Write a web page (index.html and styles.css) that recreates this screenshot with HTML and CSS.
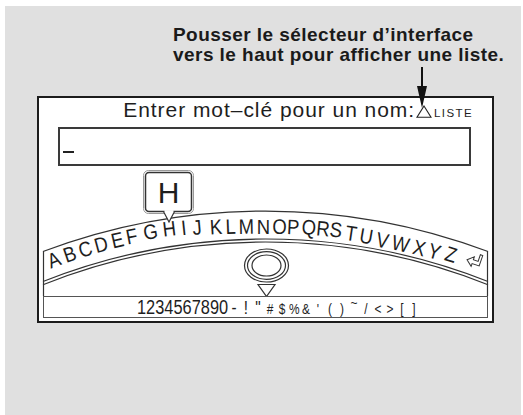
FILE: index.html
```html
<!DOCTYPE html>
<html lang="fr">
<head>
<meta charset="utf-8">
<title>Entrer mot-clé</title>
<link rel="stylesheet" href="styles.css">
</head>
<body>
<div class="panel">
  <p class="note">Pousser le sélecteur d’interface<br>vers le haut pour afficher une liste.</p>
  <svg class="pointer-arrow" width="14" height="42" viewBox="0 0 14 42">
    <line x1="7" y1="0" x2="7" y2="22" stroke="#111" stroke-width="2"/>
    <polygon points="2,19 12,19 7,41" fill="#111"/>
  </svg>
  <div class="screen">
    <div class="header"><span class="title">Entrer mot–clé pour un nom:</span><svg class="tri" width="16" height="13" viewBox="0 0 16 13"><polygon points="8,1 15,12.3 1,12.3" fill="none" stroke="#222" stroke-width="1.1"/></svg><span class="liste">LISTE</span></div>
    <div class="input"><span class="cursor"></span></div>
    <svg class="wheel" width="453" height="130" viewBox="39 166 453 130">
      <g fill="none" stroke="#333" stroke-width="1.2">
        <path d="M43 251.5 A632 632 0 0 1 488 251.5"/>
        <path d="M43 281.5 A604 604 0 0 1 488 281.5"/>
        <path d="M43 284.7 A601 601 0 0 1 488 284.7"/>
        <line x1="43.5" y1="251" x2="43.5" y2="296"/>
        <line x1="487.5" y1="251" x2="487.5" y2="296"/>
        <ellipse cx="266.5" cy="265.5" rx="22" ry="16.5"/>
        <ellipse cx="266.5" cy="265.5" rx="19" ry="13.8"/>
        <ellipse cx="266.5" cy="265.5" rx="14.5" ry="10.5"/>
      </g>
      <polygon points="258,284.5 275,284.5 266.5,296.5" fill="#fff" stroke="#333" stroke-width="1.2"/>
      <g class="letters">
        <text transform="translate(56.5 266.5) rotate(-21) scale(0.88 1)">A</text>
        <text transform="translate(72 261) rotate(-19) scale(0.88 1)">B</text>
        <text transform="translate(87.5 256) rotate(-17) scale(0.88 1)">C</text>
        <text transform="translate(103 251.5) rotate(-15) scale(0.88 1)">D</text>
        <text transform="translate(119 247) rotate(-13) scale(0.88 1)">E</text>
        <text transform="translate(133 243.5) rotate(-11) scale(0.88 1)">F</text>
        <text transform="translate(151.5 239) rotate(-9) scale(0.88 1)">G</text>
        <text transform="translate(170 236) rotate(-7) scale(0.88 1)">H</text>
        <text transform="translate(184.5 235) rotate(-6) scale(0.88 1)">I</text>
        <text transform="translate(197.5 234.5) rotate(-5) scale(0.88 1)">J</text>
        <text transform="translate(216.5 234) rotate(-3.5) scale(0.88 1)">K</text>
        <text transform="translate(231 233.8) rotate(-2) scale(0.88 1)">L</text>
        <text transform="translate(246.5 233.8) rotate(-1) scale(0.88 1)">M</text>
        <text transform="translate(263.5 234) scale(0.88 1)">N</text>
        <text transform="translate(279.5 234) rotate(1) scale(0.88 1)">O</text>
        <text transform="translate(293 234.3) rotate(2.5) scale(0.88 1)">P</text>
        <text transform="translate(308.5 234.5) rotate(4) scale(0.88 1)">Q</text>
        <text transform="translate(322.5 236) rotate(5.5) scale(0.88 1)">R</text>
        <text transform="translate(335 237) rotate(7) scale(0.88 1)">S</text>
        <text transform="translate(350 240.5) rotate(8.5) scale(0.88 1)">T</text>
        <text transform="translate(365 243.5) rotate(10) scale(0.88 1)">U</text>
        <text transform="translate(381 247.5) rotate(11.5) scale(0.88 1)">V</text>
        <text transform="translate(399 251) rotate(13) scale(0.88 1)">W</text>
        <text transform="translate(417.5 255) rotate(14.5) scale(0.88 1)">X</text>
        <text transform="translate(432.5 258.5) rotate(16) scale(0.88 1)">Y</text>
        <text transform="translate(449 261.5) rotate(17) scale(0.88 1)">Z</text>
      </g>
      <path d="M0 6 L6 1 L6 4 L11 4 L11 -3 L13.5 -3 L13.5 8 L6 8 L6 11 Z" transform="translate(469 254) rotate(19)" fill="none" stroke="#333" stroke-width="1"/>
      <rect x="143.5" y="170.5" width="50" height="43" rx="5" fill="none" stroke="#999" stroke-width="1"/>
      <rect x="145.5" y="172.5" width="46" height="39" rx="3.5" fill="#fff" stroke="#333" stroke-width="1.5"/>
      <polygon points="163.5,211.5 169,222 174.5,211.5" fill="#fff" stroke="#333" stroke-width="1.2"/>
      <rect x="164.5" y="210.2" width="9" height="2" fill="#fff"/>
      <text class="hchar" x="168.5" y="203">H</text>
    </svg>
    <div class="chars"><span class="digits">1234567890</span><span class="sym big">-</span><span class="sym big">!</span><span class="sym big">"</span><span class="sym">#</span><span class="sym">$</span><span class="sym">%</span><span class="sym">&amp;</span><span class="sym">'</span><span class="sym">(</span><span class="sym">)</span><span class="sym tilde">~</span><span class="sym">/</span><span class="sym">&lt;</span><span class="sym">&gt;</span><span class="sym">[</span><span class="sym">]</span></div>
  </div>
</div>
</body>
</html>
```
FILE: styles.css
```css
html, body {
  margin: 0;
  padding: 0;
  background: #ffffff;
}
body {
  font-family: "Liberation Sans", Arial, sans-serif;
  color: #1e1e1e;
}
.panel {
  position: relative;
  margin: 6px 2px 0 5px;
  height: 409px;
  background: #e0e0e0;
  padding-top: 19px;
  box-sizing: border-box;
}
.note {
  margin: 0 0 0 168px;
  font-weight: bold;
  font-size: 19px;
  line-height: 20px;
  letter-spacing: 0.45px;
  color: #1a1a1a;
}
.pointer-arrow {
  position: absolute;
  left: 410px;
  top: 61px;
}
.screen {
  margin: 31px 0 0 32px;
  width: 457px;
  height: 227px;
  box-sizing: border-box;
  border: 2px solid #1c1c1c;
  background: #ffffff;
  display: flex;
  flex-direction: column;
}
.header {
  height: 22px;
  padding-top: 1px;
  line-height: 22px;
  display: flex;
  justify-content: flex-end;
  align-items: baseline;
  padding-right: 19px;
}
.title {
  font-size: 21px;
  letter-spacing: 0.95px;
}
.tri {
  align-self: flex-end;
  margin: 0 1px 3px 1px;
}
.liste {
  font-size: 11.5px;
  letter-spacing: 1.4px;
  margin-left: 1px;
}
.input {
  margin: 6px 0 0 19px;
  width: 413px;
  height: 39px;
  box-sizing: border-box;
  border: 2px solid #3a3a3a;
  position: relative;
}
.cursor {
  position: absolute;
  left: 3px;
  top: 22px;
  width: 11px;
  height: 2px;
  background: #222;
}
.wheel {
  display: block;
  flex: none;
}
.letters {
  font-family: "Liberation Sans", Arial, sans-serif;
  font-size: 21px;
  text-anchor: middle;
  fill: #1e1e1e;
}
.hchar {
  font-family: "Liberation Sans", Arial, sans-serif;
  font-size: 30px;
  text-anchor: middle;
  fill: #1e1e1e;
}
.chars {
  margin: 0 4px 3px 4px;
  height: 22px;
  box-sizing: border-box;
  border: 1px solid #555;
  display: flex;
  align-items: baseline;
  padding-left: 93px;
  line-height: 20px;
}
.digits {
  display: inline-block;
  font-size: 19.5px;
  transform: scaleX(0.84);
  transform-origin: left center;
  margin-right: -17px;
}
.sym {
  display: inline-block;
  width: 12px;
  text-align: center;
  font-size: 14px;
  transform: scaleX(0.85);
}
.sym.big {
  font-size: 18px;
}
.tilde {
  position: relative;
  top: -6px;
}
```
